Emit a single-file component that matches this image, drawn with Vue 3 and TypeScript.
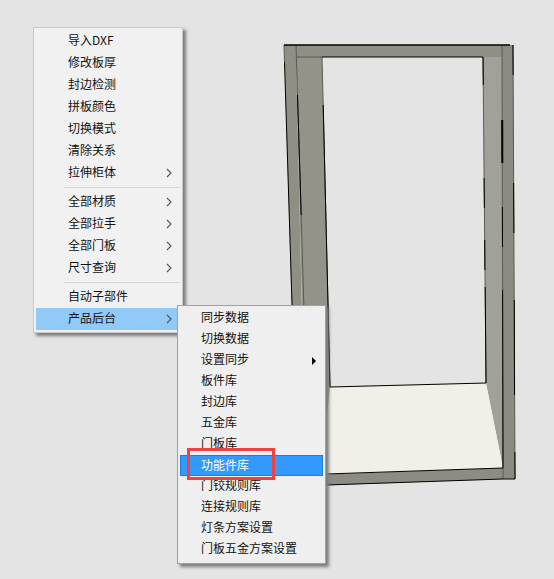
<script setup lang="ts">
type MainItem = { label: string, arrow?: boolean, active?: boolean, sep?: boolean }
type SubItem = { label: string, arrow?: boolean, active?: boolean }

const mainItems: MainItem[] = [
    { label: '导入DXF' },
    { label: '修改板厚' },
    { label: '封边检测' },
    { label: '拼板颜色' },
    { label: '切换模式' },
    { label: '清除关系' },
    { label: '拉伸柜体', arrow: true },
    { label: '', sep: true },
    { label: '全部材质', arrow: true },
    { label: '全部拉手', arrow: true },
    { label: '全部门板', arrow: true },
    { label: '尺寸查询', arrow: true },
    { label: '', sep: true },
    { label: '自动子部件' },
    { label: '产品后台', arrow: true, active: true }
]

const subItems: SubItem[] = [
    { label: '同步数据' },
    { label: '切换数据' },
    { label: '设置同步', arrow: true },
    { label: '板件库' },
    { label: '封边库' },
    { label: '五金库' },
    { label: '门板库' },
    { label: '功能件库', active: true },
    { label: '门铰规则库' },
    { label: '连接规则库' },
    { label: '灯条方案设置' },
    { label: '门板五金方案设置' }
]
</script>

<template>
    <div class="page">
        <svg class="cabinet" width="554" height="579" viewBox="0 0 554 579">
            <!-- inner side faces -->
            <polygon points="296,57 322,57 330,387 326,474 306,476" fill="#93938a" />
            <polygon points="483,57 502,57 503,468 486,383" fill="#a1a199" />
            <!-- floor -->
            <polygon points="330,387 486,383 503,468 320,475" fill="#f0f0e8" />
            <!-- frame -->
            <polygon points="284,45 513,45 515,479 503,479 502,57 296,57 306,490 297,490" fill="#8f8f86" />
            <polygon points="310,475 503,468 503,479 310,486" fill="#8c8c83" />
            <polygon points="502,45 513,45 515,479 503,479" fill="#8b8b82" />
            <!-- edges, the renderer drops parts of them so some stay grey -->
            <g fill="none" stroke="#5a5a54" stroke-width="1">
                <line x1="284" y1="45" x2="284.5" y2="62" />
                <line x1="296" y1="45" x2="304" y2="310" />
                <line x1="296" y1="57" x2="322" y2="57" />
                <line x1="322" y1="57" x2="330" y2="387" />
                <line x1="483" y1="57" x2="486" y2="383" />
                <line x1="513" y1="45" x2="515" y2="479" />
                <line x1="502" y1="45" x2="503" y2="479" />
            </g>
            <g fill="none" stroke="#000" stroke-width="1">
                <line x1="284.5" y1="62" x2="292.2" y2="310" />
                <line x1="284" y1="45" x2="510" y2="45" stroke-width="1.5" />
                <line x1="513" y1="45" x2="513.1" y2="75" />
                <line x1="513.6" y1="183" x2="513.9" y2="233" />
                <line x1="514.3" y1="300" x2="514.5" y2="395" />
                <line x1="514.9" y1="452" x2="515" y2="479" />
                <line x1="322" y1="57" x2="483" y2="57" />
                <line x1="483" y1="57" x2="483.3" y2="85" />
                <line x1="484.1" y1="178" x2="484.4" y2="208" />
                <line x1="484.7" y1="240" x2="484.9" y2="270" />
                <line x1="485.2" y1="287" x2="486" y2="383" />
                <line x1="297.5" y1="95" x2="301.2" y2="215" />
                <line x1="323.2" y1="105" x2="330" y2="387" />
                <line x1="502.2" y1="120" x2="502.3" y2="163" stroke-width="2" />
                <line x1="502.4" y1="207" x2="502.5" y2="247" />
                <line x1="502.6" y1="290" x2="503" y2="468" />
                <line x1="503" y1="479" x2="515" y2="479" />
                <line x1="330" y1="387" x2="486" y2="383" />
                <line x1="326" y1="474" x2="503" y2="468" />
                <line x1="326" y1="485" x2="503" y2="479" />
            </g>
        </svg>

        <div class="menu main-menu">
            <template v-for="item in mainItems">
                <div v-if="item.sep" class="sep"></div>
                <div v-else class="main-item" :class="{ active: item.active }">
                    <span>{{ item.label }}</span>
                    <svg v-if="item.arrow" class="chevron" width="6" height="10" viewBox="0 0 6 10">
                        <polyline points="1,1 5,5 1,9" fill="none" stroke="#555" stroke-width="1.1" />
                    </svg>
                </div>
            </template>
        </div>

        <div class="menu sub-menu">
            <div v-for="item in subItems" class="sub-item" :class="{ active: item.active }">
                <span>{{ item.label }}</span>
                <span v-if="item.arrow" class="triangle"></span>
            </div>
        </div>

        <div class="callout"></div>
    </div>
</template>

<style scoped>
.page {
    position: relative;
    width: 554px;
    height: 579px;
    overflow: hidden;
    background: #e4e4e4;
    font-family: "Noto Sans CJK SC", "Liberation Sans", sans-serif;
    font-size: 12px;
    color: #111;
}

.cabinet {
    position: absolute;
    left: 0;
    top: 0;
}

.menu {
    position: absolute;
    box-sizing: border-box;
    background: #f1f1f1;
    border: 1px solid #c8c8c8;
    box-shadow: 3px 3px 3px #7d7d7d;
}

.main-menu {
    left: 33px;
    top: 27px;
    width: 150px;
    height: 306px;
    padding: 2px;
}

.main-item {
    display: flex;
    align-items: center;
    justify-content: space-between;
    box-sizing: border-box;
    height: 22px;
    padding: 0 8px 4px 32px;
}

.main-item svg {
    margin-top: 4px;
}

.main-item.active {
    background: #91c9f7;
}

.sep {
    height: 1px;
    margin: 3px 0 3px 28px;
    background: #d4d4d4;
}

.sub-menu {
    left: 177px;
    top: 305px;
    width: 149px;
    height: 259px;
    padding: 2px;
    background: #efefef;
    border-color: #a0a0a0;
}

.sub-item {
    display: flex;
    align-items: center;
    justify-content: space-between;
    box-sizing: border-box;
    height: 21px;
    padding: 0 7px 4px 21px;
}

.sub-item.active {
    background: #3399ff;
    border: 1px solid #1a7fd8;
    padding: 0 6px 2px 20px;
    color: #fff;
}

.triangle {
    width: 0;
    height: 0;
    margin-top: 4px;
    border-left: 4px solid #000;
    border-top: 4px solid transparent;
    border-bottom: 4px solid transparent;
}

.callout {
    position: absolute;
    left: 187px;
    top: 448px;
    width: 88px;
    height: 32px;
    box-sizing: border-box;
    border: 3px solid #f04040;
}
</style>
